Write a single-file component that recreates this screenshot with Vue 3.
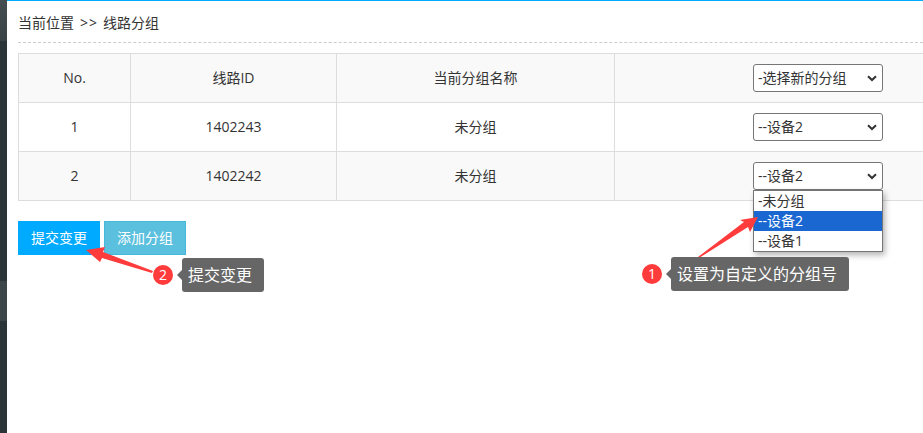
<template>
  <div class="page">
    <aside class="side">
      <div class="side-item active"></div>
      <div class="side-gap"></div>
      <div class="side-item"></div>
    </aside>
    <main class="main">
      <div class="crumb">当前位置<span class="sep">&gt;&gt;</span>线路分组</div>
      <table class="grid">
        <colgroup>
          <col class="c1" />
          <col class="c2" />
          <col class="c3" />
          <col class="c4" />
        </colgroup>
        <tbody>
          <tr class="shade">
            <td>No.</td>
            <td>线路ID</td>
            <td>当前分组名称</td>
            <td>
              <select class="sel">
                <option>-选择新的分组</option>
              </select>
            </td>
          </tr>
          <tr v-for="(row, i) in rows" :key="row.id" :class="{ shade: i % 2 === 1 }">
            <td>{{ i + 1 }}</td>
            <td>{{ row.id }}</td>
            <td>未分组</td>
            <td>
              <select class="sel">
                <option>--设备2</option>
              </select>
            </td>
          </tr>
        </tbody>
      </table>
      <div class="actions">
        <button class="btn primary">提交变更</button>
        <button class="btn info">添加分组</button>
      </div>
    </main>

    <!-- open dropdown of the last row -->
    <ul class="menu">
      <li v-for="opt in options" :key="opt" :class="{ on: opt === '--设备2' }">{{ opt }}</li>
    </ul>

    <!-- annotation arrows -->
    <svg class="marks" width="923" height="433" viewBox="0 0 923 433">
      <path d="M698 257 L744 222 L740 220 L758 217 L750 232 L748 227 L699 258 Z" fill="#ff3b3b" />
      <path d="M86 250 L105 247 L103 252 L153 271 L152 273 L102 258 L100 262 Z" fill="#ff3b3b" />
    </svg>

    <div class="note n1">
      <span class="num">1</span>
      <span class="tip">设置为自定义的分组号</span>
    </div>
    <div class="note n2">
      <span class="num">2</span>
      <span class="tip">提交变更</span>
    </div>
  </div>
</template>

<script setup>
const rows = [{ id: 1402243 }, { id: 1402242 }]
const options = ['-未分组', '--设备2', '--设备1']
</script>

<style>
html, body {
  margin: 0;
  background: #fff;
  overflow: hidden;
}
</style>

<style scoped>
.page {
  position: relative;
  display: flex;
  width: 923px;
  height: 433px;
  overflow: hidden;
  font-family: "Open Sans", "Noto Sans CJK SC", sans-serif;
  font-size: 14px;
  color: #333;
}

.side {
  width: 7px;
  flex: none;
  background: #2b3437;
  display: flex;
  flex-direction: column;
}

.side-item {
  height: 40px;
  background: #3c4649;
}

.side-item.active {
  height: 41px;
  background: linear-gradient(#444e51, #394346);
}

.side-gap {
  height: 240px;
}

.main {
  flex: 1;
  min-width: 0;
  border-top: 1px solid #00aaff;
  padding: 0 0 0 11px;
}

.crumb {
  height: 41px;
  line-height: 43px;
  border-bottom: 1px dashed #ccc;
  margin-bottom: 10px;
  white-space: nowrap;
}

.sep {
  margin: 0 5px 0 6px;
  letter-spacing: 1px;
}

.grid {
  width: 1004px;
  table-layout: fixed;
  border-collapse: collapse;
}

.c1 { width: 112px; }
.c2 { width: 206px; }
.c3 { width: 278px; }

.grid td {
  height: 49px;
  padding: 0 0 2px;
  box-sizing: border-box;
  border: 1px solid #ddd;
  text-align: center;
}

.shade td {
  background: #f9f9f9;
}

.sel {
  display: block;
  margin: 2px auto 0;
  width: 130px;
  height: 28px;
  padding: 0 0 2px 4px;
  appearance: none;
  background: #fff url("data:image/svg+xml,%3Csvg xmlns='http://www.w3.org/2000/svg' width='10' height='7' viewBox='0 0 10 7'%3E%3Cpath d='M1 1.2 L5 5 L9 1.2' fill='none' stroke='%23333' stroke-width='2'/%3E%3C/svg%3E") no-repeat right 5px center;
  border: 1px solid #767676;
  border-radius: 3px;
  font-family: inherit;
  font-size: 14px;
  color: #333;
}

.actions {
  display: flex;
  gap: 4px;
  margin-top: 20px;
}

.btn {
  width: 82px;
  height: 34px;
  padding: 0 0 2px;
  border: 1px solid transparent;
  font-family: inherit;
  font-size: 14px;
  color: #fff;
}

.primary {
  background: #00aaff;
  border-color: #00aaff;
}

.info {
  background: #5bc0de;
  border-color: #46b8da;
}

.menu {
  position: absolute;
  left: 753px;
  top: 190px;
  width: 128px;
  margin: 0;
  padding: 0;
  list-style: none;
  background: #fff;
  border: 1px solid #767676;
  box-shadow: 2px 3px 6px rgba(0, 0, 0, 0.3);
}

.menu li {
  height: 20px;
  line-height: 20px;
  padding-left: 4px;
  font-size: 14px;
}

.menu li.on {
  background: #1a67d2;
  color: #fff;
}

.marks {
  position: absolute;
  left: 0;
  top: 0;
}

.note {
  position: absolute;
  display: flex;
  align-items: center;
}

.n1 {
  left: 642px;
  top: 257px;
}

.n2 {
  left: 153px;
  top: 258px;
}

.num {
  width: 20px;
  height: 20px;
  border-radius: 50%;
  background: #ff3b3b;
  color: #fff;
  font-size: 14px;
  line-height: 20px;
  text-align: center;
}

.tip {
  position: relative;
  margin-left: 9px;
  height: 34px;
  line-height: 34px;
  padding: 0 12px 0 6px;
  background: #666;
  border-radius: 3px;
  color: #fff;
  font-size: 16px;
  white-space: nowrap;
}

.tip::before {
  content: "";
  position: absolute;
  left: -5px;
  top: 12px;
  border-top: 5px solid transparent;
  border-bottom: 5px solid transparent;
  border-right: 5px solid #666;
}
</style>
